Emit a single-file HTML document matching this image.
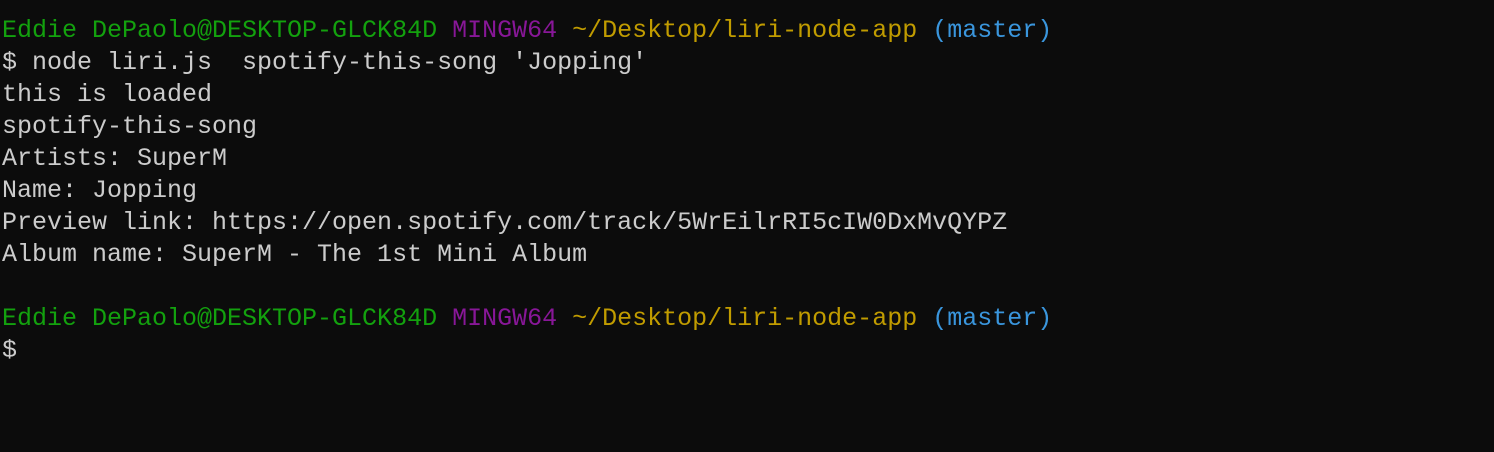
<!DOCTYPE html>
<html><head><style>
html,body{margin:0;background:#0c0c0c;width:1494px;height:452px;overflow:hidden}
pre{margin:0;position:absolute;left:2px;top:15px;font-family:"Liberation Mono",monospace;font-size:25px;line-height:32px;color:#cccccc}
.g{color:#13a10e}.p{color:#881798}.y{color:#c19c00}.b{color:#3a96dd}
</style></head><body>
<pre><span class="g">Eddie DePaolo@DESKTOP-GLCK84D</span> <span class="p">MINGW64</span> <span class="y">~/Desktop/liri-node-app</span> <span class="b">(master)</span>
$ node liri.js  spotify-this-song 'Jopping'
this is loaded
spotify-this-song
Artists: SuperM
Name: Jopping
Preview link: https://open.spotify.com/track/5WrEilrRI5cIW0DxMvQYPZ
Album name: SuperM - The 1st Mini Album

<span class="g">Eddie DePaolo@DESKTOP-GLCK84D</span> <span class="p">MINGW64</span> <span class="y">~/Desktop/liri-node-app</span> <span class="b">(master)</span>
$</pre>
</body></html>
